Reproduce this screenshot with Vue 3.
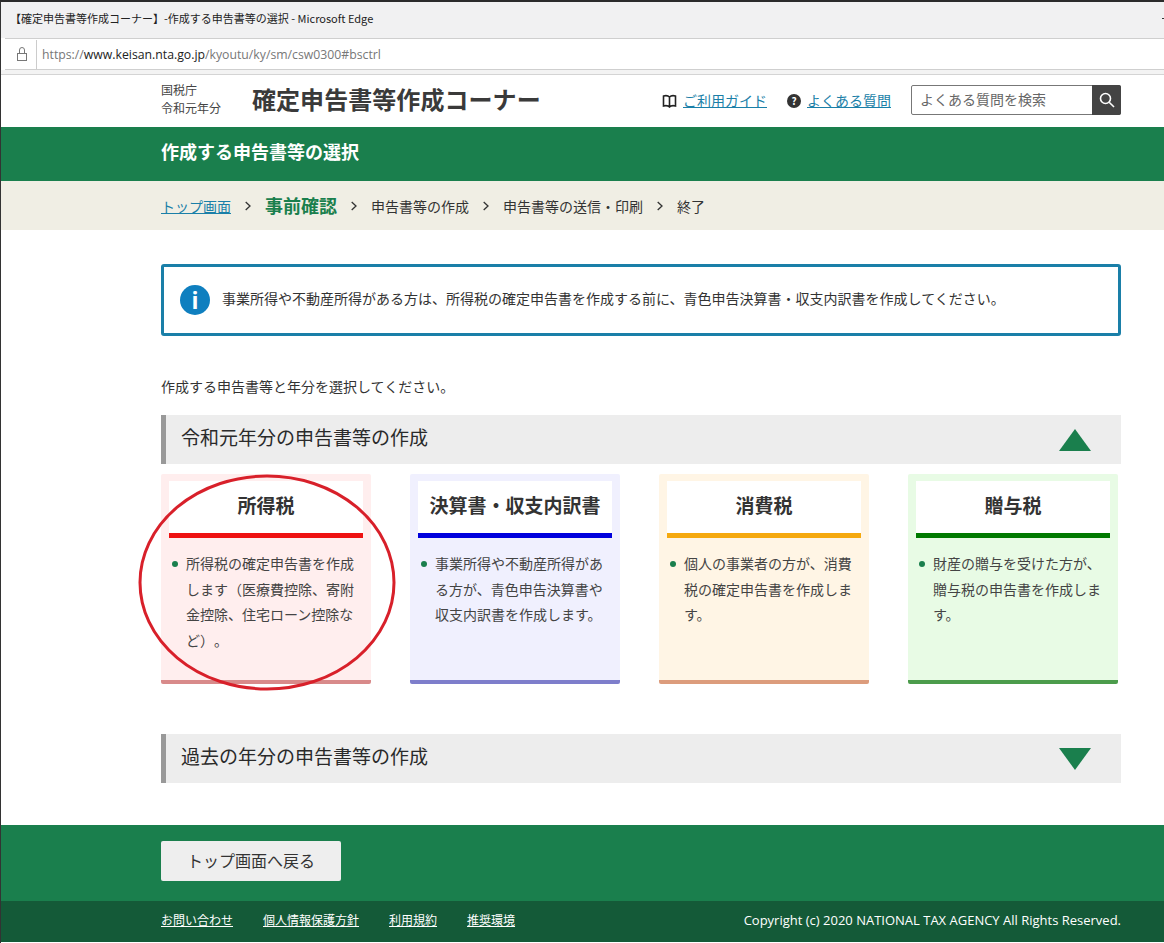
<script setup>
const cards = [
  { title: '所得税', text: '所得税の確定申告書を作成します（医療費控除、寄附金控除、住宅ローン控除など）。', bg: '#ffeeee', bar: '#ee1111', foot: '#d88a8a' },
  { title: '決算書・収支内訳書', text: '事業所得や不動産所得がある方が、青色申告決算書や収支内訳書を作成します。', bg: '#f0f0fe', bar: '#0000dd', foot: '#7e7ecb' },
  { title: '消費税', text: '個人の事業者の方が、消費税の確定申告書を作成します。', bg: '#fff5e5', bar: '#f5a90f', foot: '#dc9c7c' },
  { title: '贈与税', text: '財産の贈与を受けた方が、贈与税の申告書を作成します。', bg: '#e8fbe5', bar: '#007a00', foot: '#4c9c4c' }
]
const steps = ['申告書等の作成', '申告書等の送信・印刷', '終了']
const footLinks = ['お問い合わせ', '個人情報保護方針', '利用規約', '推奨環境']
</script>

<template>
  <div class="page">
    <div class="titlebar">【確定申告書等作成コーナー】-作成する申告書等の選択 - Microsoft Edge</div>
    <div class="addressbar">
      <svg class="lock" width="14" height="16" viewBox="0 0 14 16" fill="none" stroke="#777" stroke-width="1">
        <rect x="2.5" y="7.5" width="9" height="7" />
        <path d="M4.5 7.5V4a2.5 2.5 0 0 1 5 0v3.500" />
      </svg>
      <span class="url">https://<b>www.keisan.nta.go.jp</b>/kyoutu/ky/sm/csw0300#bsctrl</span>
    </div>
    <div class="toolbar-gap"></div>

    <header class="header">
      <div class="wrap header-in">
        <div class="agency"><div>国税庁</div><div>令和元年分</div></div>
        <div class="site">確定申告書等作成コーナー</div>
        <div class="tools">
          <svg class="book" width="15" height="14" viewBox="0 0 15 14" fill="none" stroke="#222" stroke-width="1.600">
            <path d="M7.500 3C6 1.500 3.500 1.500 1.500 2v10c2-.5 4.500-.5 6 1 1.500-1.500 4-1.500 6-1V2c-2-.5-4.500-.5-6 1zM7.500 3v10" />
          </svg>
          <a class="link guide">ご利用ガイド</a>
          <span class="qicon">?</span>
          <a class="link">よくある質問</a>
          <div class="search">
            <span class="search-text">よくある質問を検索</span>
            <span class="search-btn">
              <svg width="16" height="16" viewBox="0 0 16 16" fill="none" stroke="#fff" stroke-width="1.600">
                <circle cx="6.500" cy="6.500" r="5" />
                <path d="M10.200 10.200L15 15" />
              </svg>
            </span>
          </div>
        </div>
      </div>
    </header>

    <div class="greenbar"><div class="wrap">作成する申告書等の選択</div></div>

    <nav class="crumbs">
      <div class="wrap crumbs-in">
        <a class="link">トップ画面</a>
        <svg class="sep" width="6" height="10" viewBox="0 0 6 10" fill="none" stroke="#333" stroke-width="1.300"><path d="M.7 1L5 5 .7 9" /></svg>
        <strong>事前確認</strong>
        <template v-for="s in steps" :key="s">
          <svg class="sep" width="6" height="10" viewBox="0 0 6 10" fill="none" stroke="#333" stroke-width="1.300"><path d="M.7 1L5 5 .7 9" /></svg>
          <span>{{ s }}</span>
        </template>
      </div>
    </nav>

    <main class="wrap main">
      <div class="notice">
        <span class="info">i</span>
        <span class="notice-text">事業所得や不動産所得がある方は、所得税の確定申告書を作成する前に、青色申告決算書・収支内訳書を作成してください。</span>
      </div>
      <p class="lead">作成する申告書等と年分を選択してください。</p>

      <div class="section">
        <span class="section-text">令和元年分の申告書等の作成</span>
        <span class="tri up"></span>
      </div>

      <div class="cards">
        <section v-for="c in cards" :key="c.title" class="card" :style="{ background: c.bg, borderBottomColor: c.foot }">
          <h3 class="card-title" :style="{ borderBottomColor: c.bar }">{{ c.title }}</h3>
          <p class="card-text">{{ c.text }}</p>
        </section>
      </div>

      <div class="section past">
        <span class="section-text">過去の年分の申告書等の作成</span>
        <span class="tri down"></span>
      </div>
    </main>

    <div class="foot-top">
      <div class="wrap"><button class="back">トップ画面へ戻る</button></div>
    </div>
    <footer class="foot-bottom">
      <div class="wrap foot-in">
        <a v-for="f in footLinks" :key="f">{{ f }}</a>
        <span class="copy">Copyright (c) 2020 NATIONAL TAX AGENCY All Rights Reserved.</span>
      </div>
    </footer>

    <svg class="circle" width="270" height="225" viewBox="0 0 270 225" fill="none">
      <ellipse cx="135" cy="112.500" rx="127" ry="106.500" stroke="#d8202a" stroke-width="3" />
    </svg>
  </div>
</template>

<style>
html, body { margin: 0; background: #fff; }
</style>

<style scoped>
.page {
  position: relative;
  width: 1164px;
  height: 943px;
  box-sizing: border-box;
  overflow: hidden;
  border-left: 1px solid #333;
  border-top: 2px solid #2b2b2b;
  font-family: "Noto Sans CJK JP", "Noto Sans", sans-serif;
  font-size: 14px;
  color: #333;
  text-spacing-trim: space-all;
}
.wrap { width: 960px; margin-left: 160px; }
.titlebar {
  position: relative;
  height: 36px;
  box-sizing: border-box;
  background: #f1f1f2;
  padding-left: 9px;
  line-height: 32px;
  font-size: 11px;
  color: #222;
}
.titlebar::after {
  content: ""; position: absolute; right: 0; top: 16px;
  width: 2px; height: 1px; background: #333;
}
.addressbar {
  height: 32px;
  box-sizing: border-box;
  background: #fff;
  border-top: 1px solid #cfcfcf;
  border-bottom: 1px solid #cfcfcf;
  margin-left: 4px;
  display: flex;
  align-items: center;
  font-family: "Open Sans", sans-serif;
  font-size: 12.250px;
  color: #777;
}
.lock { margin-left: 10px; margin-right: 7px; }
.url { border-left: 1px solid #ccc; padding-left: 5px; line-height: 28px; padding-top: 1px; }
.url b { font-weight: 400; color: #222; }
.toolbar-gap { height: 5px; box-sizing: border-box; background: #f3f3f3; border-bottom: 1px solid #d4d4d4; }
.header { height: 52px; background: #fff; }
.header-in { display: flex; align-items: center; height: 100%; }
.agency { width: 91px; font-size: 12px; line-height: 18px; color: #444; margin-top: -4px; }
.site { font-size: 24px; font-weight: 700; color: #3a3a3a; line-height: 50px; letter-spacing: .06px; margin-top: -4px; }
.tools { margin-left: auto; display: flex; align-items: center; margin-top: -2px; }
.book { margin-right: 6px; margin-top: 2px; }
.link { color: #1a7fa8; text-decoration: underline; }
.guide { margin-right: 20px; }
.qicon {
  width: 14px; height: 14px; border-radius: 50%;
  background: #333; color: #fff;
  font-size: 10px; font-weight: 700; line-height: 14px; text-align: center;
  margin-right: 6px; margin-top: 2px;
}
.search {
  display: flex; margin-left: 20px; width: 210px; height: 30px;
  box-sizing: border-box; border: 1px solid #777; border-radius: 2px; background: #fff;
}
.search-text { flex: 1; padding-left: 8px; line-height: 27px; color: #666; font-size: 14px; }
.search-btn {
  width: 29px; margin: -1px -1px -1px 0;
  background: #444; border-radius: 0 2px 2px 0;
  display: flex; align-items: center; justify-content: center;
}
.greenbar {
  height: 54px; background: #1a7f4d; color: #fff;
  font-size: 18px; font-weight: 700; line-height: 49px; white-space: nowrap;
}
.crumbs { height: 49px; background: #f0eee4; }
.crumbs-in { display: flex; align-items: center; height: 100%; gap: 14px; }
.crumbs strong { color: #1a7f4d; font-size: 18px; line-height: 24px; margin-top: -1px; }
.sep { flex: none; }
.main { padding-top: 34px; }
.notice {
  height: 72px; box-sizing: border-box;
  border: 3px solid #1a7fa8; border-radius: 3px;
  display: flex; align-items: center; gap: 12px; padding-left: 16px;
  font-size: 14px; color: #333;
}
.notice-text { margin-top: -5px; }
.info {
  width: 30px; height: 30px; border-radius: 50%;
  background: #0f7fbf; color: #fff;
  font-family: "Open Sans", sans-serif; font-size: 23px; font-weight: 700;
  line-height: 30px; text-align: center;
}
.lead { margin: 40px 0 19px; font-size: 14px; line-height: 20px; }
.section {
  height: 49px; box-sizing: border-box;
  background: #ededed; border-left: 5px solid #999;
  display: flex; align-items: center; justify-content: space-between;
  padding: 0 30px 0 15px;
  font-size: 19px; color: #2a2a2a;
}
.section-text { margin-top: -6px; }
.tri { width: 0; height: 0; border-left: 16px solid transparent; border-right: 16px solid transparent; }
.up { border-bottom: 22px solid #1a7f4d; }
.down { border-top: 22px solid #1a7f4d; }
.cards { display: flex; gap: 39px; margin-top: 10px; }
.card {
  width: 210px; height: 210px; box-sizing: border-box;
  padding: 7px 8px 0;
  border-bottom: 4px solid;
  border-radius: 2px;
}
.card-title {
  margin: 0; height: 57px; box-sizing: border-box;
  background: #fff; border-bottom: 5px solid;
  text-align: center; font-size: 19px; font-weight: 700; line-height: 48px; color: #333;
  white-space: nowrap;
}
.card-text {
  position: relative;
  margin: 13px 0 0; padding-left: 17px;
  font-size: 14px; line-height: 25.500px; color: #444;
}
.card-text::before {
  content: ""; position: absolute; left: 3px; top: 10px;
  width: 6px; height: 6px; border-radius: 50%; background: #1a7f4d;
}
.past { margin-top: 50px; }
.foot-top { margin-top: 42px; height: 76px; background: #1a7f4d; padding-top: 16px; box-sizing: border-box; }
.back {
  display: block; width: 180px; height: 40px; border: 0; border-radius: 2px;
  background: #eee; color: #333; font-family: inherit; font-size: 16px; padding: 0 0 2px;
}
.foot-bottom { height: 41px; background: #145a38; color: #fff; font-size: 12px; }
.foot-in { display: flex; align-items: center; height: 100%; gap: 30px; }
.foot-in a { text-decoration: underline; margin-top: -4px; }
.copy { margin-left: auto; font-family: "Open Sans", sans-serif; font-size: 13px; margin-top: -3px; }
.circle { position: absolute; left: 131px; top: 468px; pointer-events: none; }
</style>
